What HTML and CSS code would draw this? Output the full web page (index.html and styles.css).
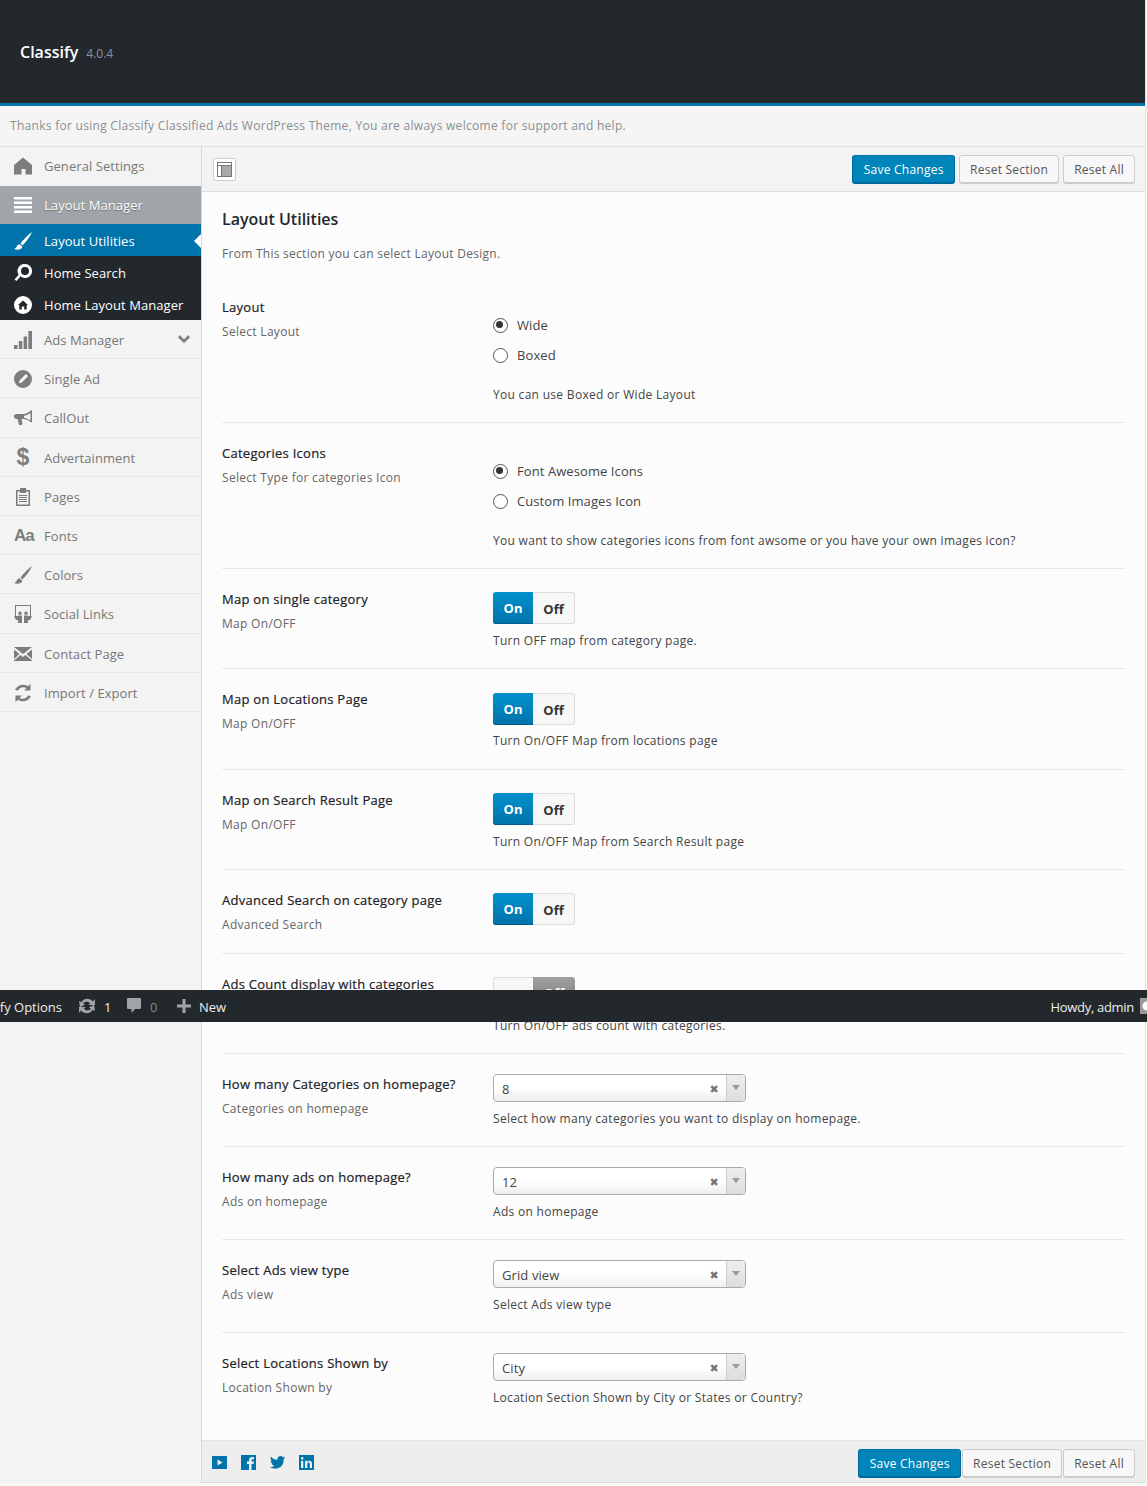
FILE: index.html
```html
<!DOCTYPE html>
<html lang="en">
<head>
<meta charset="utf-8">
<title>Classify Options</title>
<link rel="stylesheet" href="styles.css">
</head>
<body>
<div class="panel">
  <header class="head"><h1 class="brand">Classify</h1><span class="ver">4.0.4</span></header>
  <div class="intro">Thanks for using Classify Classified Ads WordPress Theme, You are always welcome for support and help.</div>
  <div class="main">
    <nav class="side">
      <a class="item first"><svg class="ico" viewBox="0 0 18 18"><path d="M9 .5 18 8v9.500h-6.500V12H7.500v5.500H0V8z"/></svg>General Settings</a>
      <a class="item parent"><svg class="ico" viewBox="0 0 18 18"><path d="M0 1h18v2.600H0zM0 5.500h18v2.600H0zM0 10h18v2.600H0zM0 14.500h18v2.600H0z"/></svg>Layout Manager</a>
      <a class="sub current"><svg class="ico" viewBox="0 0 18 18"><path d="M18 0C15 2 9.500 7.500 6.500 11.500l2 2C12 10 16.500 4 18 0zM5.500 12.300C2.500 12.500 3.500 16 0 17c3 1.200 8 1 8.300-2.500z"/></svg>Layout Utilities</a>
      <a class="sub"><svg class="ico" viewBox="0 0 18 18"><path fill-rule="evenodd" d="M11 0a7 7 0 1 1-4.500 12.300L2.500 17 .5 15.500l4.200-4.700A7 7 0 0 1 11 0zm0 3a4 4 0 1 0 0 8 4 4 0 0 0 0-8z"/></svg>Home Search</a>
      <a class="sub"><svg class="ico" viewBox="0 0 18 18"><path fill-rule="evenodd" d="M9 0a9 9 0 1 1 0 18A9 9 0 0 1 9 0zm0 4.500L4 9h1.300v4.500h2.500v-3h2.400v3h2.500V9H14z"/></svg>Home Layout Manager</a>
      <a class="item"><svg class="ico" viewBox="0 0 18 18"><path d="M0 14h3.500v4H0zM4.800 10h3.500v8H4.800zM9.600 5.500h3.500V18H9.600zM14.400 0H18v18h-3.600z"/></svg>Ads Manager<svg class="chev" viewBox="0 0 12 8"><path d="M1.500 0 6 4.300 10.500 0 12 2.500 6 8 0 2.500z"/></svg></a>
      <a class="item"><svg class="ico" viewBox="0 0 18 18"><path fill-rule="evenodd" d="M9 0a9 9 0 1 1 0 18A9 9 0 0 1 9 0zm2.700 4.300-6 6-.9 3 3-.8 6-6c.5-.6-1.500-2.700-2.100-2.200z"/></svg>Single Ad</a>
      <a class="item"><svg class="ico" viewBox="0 0 18 18"><path fill-rule="evenodd" d="M18 1v12l-1 .4C14.500 11 12 10 9 10H7.500l1 4.500-1 1.500H5L3.500 10H2.500C1 10 0 9 0 7.500S1 5 2.500 5H9c3 0 5.500-1.500 8-3.600zM16.500 4C14.500 5.500 12 6.500 10 6.700v2c2 .3 4.500 1.200 6.500 2.600z"/></svg>CallOut</a>
      <a class="item"><span class="glyph dollar">$</span>Advertainment</a>
      <a class="item"><svg class="ico" viewBox="0 0 18 18"><path fill-rule="evenodd" d="M2 2h4V0h6v2h4v16H2zM3.500 3.500v13h11v-13H12V5H6V3.500zM5 7h8v1H5zM5 9h8v1H5zM5 11h8v1H5zM5 13h8v1H5z"/></svg>Pages</a>
      <a class="item"><span class="glyph aa">Aa</span>Fonts</a>
      <a class="item"><svg class="ico" viewBox="0 0 18 18"><path d="M18 0C15 2 9.500 7.500 6.500 11.500l2 2C12 10 16.500 4 18 0zM5.500 12.300C2.500 12.500 3.500 16 0 17c3 1.200 8 1 8.300-2.500z"/></svg>Colors</a>
      <a class="item"><svg class="ico" viewBox="0 0 18 18"><path fill-rule="evenodd" d="M1 0h16v11h-1V1H2v10H1zM6 6.500a1.800 1.800 0 1 1 0 3.600 1.800 1.800 0 0 1 0-3.600zm6 0a1.800 1.800 0 1 1 0 3.600 1.800 1.800 0 0 1 0-3.600zM0 11h4v-.5h4V18H4v-3H2zM18 11h-4v-.5h-4V18h4v-3h2z"/></svg>Social Links</a>
      <a class="item"><svg class="ico" viewBox="0 0 18 18"><path d="M0 2h18l-9 7zM0 4.500 5.500 9 0 14zM18 4.500 12.500 9l5.500 5zM0 15.500l6.500-5.500L9 12l2.500-2 6.500 5.500V16H0z"/></svg>Contact Page</a>
      <a class="item"><svg class="ico" viewBox="0 0 18 18"><path d="M16.500 0v6.500H10l2.500-2.400C10 2.500 6 3 4 6.500L1 6C3.200 1 9-1 14 2.200zM1.500 18v-6.500H8l-2.500 2.400c2.500 1.600 6.500 1.100 8.500-2.400l3 .5C14.800 17 9 19 4 15.800z"/></svg>Import / Export</a>
    </nav>
    <section class="content">
      <div class="bar top">
        <span class="layout-ico"><svg viewBox="0 0 15 15"><path fill-rule="evenodd" d="M0 0h15v15H0zm1 1v2h13V1zm0 3v10h3V4zm4 0v10h9V4z"/><path class="shade" d="M5 4h9v10H5z"/></svg></span>
        <div class="actions"><button class="btn primary">Save Changes</button><button class="btn">Reset Section</button><button class="btn">Reset All</button></div>
      </div>
      <div class="body">
        <h2 class="sec-title">Layout Utilities</h2>
        <p class="sec-desc">From This section you can select Layout Design.</p>
        <div class="row radio-row">
          <div><div class="label">Layout</div><div class="hint">Select Layout</div></div>
          <div class="field">
            <div class="radio on">Wide</div>
            <div class="radio">Boxed</div>
            <div class="note radio-note">You can use Boxed or Wide Layout</div>
          </div>
        </div>
        <div class="row radio-row">
          <div><div class="label">Categories Icons</div><div class="hint">Select Type for categories Icon</div></div>
          <div class="field">
            <div class="radio on">Font Awesome Icons</div>
            <div class="radio">Custom Images Icon</div>
            <div class="note radio-note">You want to show categories icons from font awsome or you have your own images icon?</div>
          </div>
        </div>
        <div class="row switch-row">
          <div><div class="label">Map on single category</div><div class="hint">Map On/OFF</div></div>
          <div class="field"><div class="switch"><span class="sw-on active">On</span><span class="sw-off">Off</span></div><div class="note">Turn OFF map from category page.</div></div>
        </div>
        <div class="row switch-row">
          <div><div class="label">Map on Locations Page</div><div class="hint">Map On/OFF</div></div>
          <div class="field"><div class="switch"><span class="sw-on active">On</span><span class="sw-off">Off</span></div><div class="note">Turn On/OFF Map from locations page</div></div>
        </div>
        <div class="row switch-row">
          <div><div class="label">Map on Search Result Page</div><div class="hint">Map On/OFF</div></div>
          <div class="field"><div class="switch"><span class="sw-on active">On</span><span class="sw-off">Off</span></div><div class="note">Turn On/OFF Map from Search Result page</div></div>
        </div>
        <div class="row switch-row short">
          <div><div class="label">Advanced Search on category page</div><div class="hint">Advanced Search</div></div>
          <div class="field"><div class="switch"><span class="sw-on active">On</span><span class="sw-off">Off</span></div></div>
        </div>
        <div class="row switch-row">
          <div><div class="label">Ads Count display with categories</div><div class="hint">Ads Count</div></div>
          <div class="field"><div class="switch"><span class="sw-on">On</span><span class="sw-off dark">Off</span></div><div class="note">Turn On/OFF ads count with categories.</div></div>
        </div>
        <div class="row select-row">
          <div><div class="label">How many Categories on homepage?</div><div class="hint">Categories on homepage</div></div>
          <div class="field"><div class="select"><span class="sel-val">8</span><span class="sel-x">✖</span><span class="sel-arrow"></span></div><div class="note">Select how many categories you want to display on homepage.</div></div>
        </div>
        <div class="row select-row">
          <div><div class="label">How many ads on homepage?</div><div class="hint">Ads on homepage</div></div>
          <div class="field"><div class="select"><span class="sel-val">12</span><span class="sel-x">✖</span><span class="sel-arrow"></span></div><div class="note">Ads on homepage</div></div>
        </div>
        <div class="row select-row">
          <div><div class="label">Select Ads view type</div><div class="hint">Ads view</div></div>
          <div class="field"><div class="select"><span class="sel-val">Grid view</span><span class="sel-x">✖</span><span class="sel-arrow"></span></div><div class="note">Select Ads view type</div></div>
        </div>
        <div class="row select-row last">
          <div><div class="label">Select Locations Shown by</div><div class="hint">Location Shown by</div></div>
          <div class="field"><div class="select"><span class="sel-val">City</span><span class="sel-x">✖</span><span class="sel-arrow"></span></div><div class="note">Location Section Shown by City or States or Country?</div></div>
        </div>
      </div>
      <div class="bar bottom">
        <div class="socials">
          <svg class="soc" viewBox="0 0 15 15"><path fill-rule="evenodd" d="M0 1h15v13H0zm5.500 3.500v6l5-3z"/></svg>
          <svg class="soc fb" viewBox="0 0 15 15"><path fill-rule="evenodd" d="M0 0h15v15h-4.500V9h2l.4-2.400h-2.400V5.300c0-.7.300-1.100 1.100-1.100H13V2c-2.900-.4-5 .3-5 3v1.600H6V9h2v6H0z"/></svg>
          <svg class="soc" viewBox="0 0 16 14"><path d="M16 1.700c-.6.3-1.200.4-1.900.5.700-.4 1.200-1 1.400-1.800-.6.4-1.300.6-2 .8A3.300 3.300 0 0 0 7.900 4.200C5.200 4 2.800 2.800 1.100.8c-.9 1.500-.4 3.400 1 4.400-.5 0-1-.2-1.500-.4 0 1.600 1.100 3 2.600 3.300-.5.100-1 .1-1.500 0 .4 1.300 1.600 2.200 3.100 2.300A6.600 6.600 0 0 1 0 11.800C6.300 15.800 15 12.200 14.400 4c.6-.6 1.200-1.400 1.600-2.300z"/></svg>
          <svg class="soc" viewBox="0 0 15 15"><path fill-rule="evenodd" d="M0 0h15v15H0zm2 5.700V13h2.300V5.700zM3.200 2a1.300 1.300 0 1 0 0 2.700 1.300 1.300 0 0 0 0-2.700zM6 5.700V13h2.300V9c0-2 2.500-2.200 2.500 0v4H13V8.600c0-3.500-3.500-3.400-4.700-1.700v-1.200z"/></svg>
        </div>
        <div class="actions tight"><button class="btn primary">Save Changes</button><button class="btn">Reset Section</button><button class="btn">Reset All</button></div>
      </div>
    </section>
  </div>
</div>
<div class="adminbar">
  <span class="ab-clip"><span class="ab-name">Classify Options</span></span>
  <svg class="ab-ico refresh" viewBox="0 0 18 18"><path d="M15 4.500C11.500.5 6 1 3.500 5L1 4.200l1 6 5.200-2.700L5 6.500c2-2.500 5-2.500 7.200 0L10 8h7V2zM3 13.500c3.500 4 9 3.500 11.500-.5l2.500.8-1-6-5.200 2.700 2.200 1c-2 2.500-5 2.500-7.200 0L8 10H1v6z"/></svg>
  <span class="ab-count">1</span>
  <svg class="ab-ico bubble" viewBox="0 0 14 16"><path d="M1 0h12a1 1 0 0 1 1 1v9a1 1 0 0 1-1 1H8l-3.500 4v-4H1a1 1 0 0 1-1-1V1a1 1 0 0 1 1-1z"/></svg>
  <span class="ab-count muted">0</span>
  <svg class="ab-ico plus" viewBox="0 0 14 14"><path d="M5.500 0h3v5.500H14v3H8.500V14h-3V8.500H0v-3h5.500z"/></svg>
  <span class="ab-new">New</span>
  <span class="ab-howdy">Howdy, admin</span>
  <span class="avatar"></span>
</div>
</body>
</html>
```
FILE: styles.css
```css
* { box-sizing: border-box; }
html, body { margin: 0; padding: 0; }
body {
  position: relative;
  height: 1486px;
  overflow: hidden;
  background: #f9f9f9;
  font-family: "Open Sans", "Noto Sans", sans-serif;
  font-size: 13px;
  color: #444;
}
.panel { width: 1146px; border-right: 1px solid #e5e5e5; }
.head {
  height: 106px;
  background: #23282d;
  border-bottom: 3px solid #0073aa;
  padding: 40px 20px 0;
  display: flex;
  align-items: baseline;
  gap: 8px;
}
.brand { margin: 0; font-size: 16px; line-height: 24px; font-weight: 600; color: #fff; }
.ver { font-size: 12px; color: #8b929b; }
.intro {
  height: 41px;
  padding: 0 10px;
  line-height: 39px;
  font-size: 12px;
  letter-spacing: .285px;
  color: #8a8f94;
  background: #f5f5f5;
  border-bottom: 1px solid #dfdfdf;
}
.main { display: flex; height: 1336px; }
.side {
  width: 202px;
  flex: none;
  background: #f3f3f3;
  border-right: 1px solid #d8d8d8;
}
.item, .sub {
  display: flex;
  align-items: center;
  gap: 12px;
  padding-left: 14px;
  position: relative;
  white-space: nowrap;
  letter-spacing: .06px;
}
.item { height: 39.2px; padding-top: 2px; color: #777; border-bottom: 1px solid #e8e8e8; }
.item .ico { fill: #7d7d7d; }
.item.first { height: 39px; padding-top: 0; padding-bottom: 2px; border-bottom: 0; }
.item.parent {
  height: 38px;
  padding-top: 0;
  background: #a0a5aa;
  color: #fff;
  border-bottom: 0;
  text-shadow: 0 1px 1px rgba(0, 0, 0, .35);
}
.item.parent .ico { fill: #fff; }
.sub { height: 32px; padding-top: 2px; background: #23282d; color: #fff; }
.sub .ico { fill: #fff; }
.sub:last-of-type { height: 33px; }
.sub.current { background: #0073aa; }
.sub.current::after {
  content: "";
  position: absolute;
  right: 0;
  top: 10px;
  border: 7px solid transparent;
  border-right-color: #fff;
  border-left-width: 0;
}
.ico { width: 18px; height: 18px; flex: none; }
.glyph { width: 18px; flex: none; text-align: center; font-weight: 700; color: #7d7d7d; font-family: "Liberation Sans", sans-serif; }
.dollar { font-size: 23px; }
.aa { font-size: 17px; letter-spacing: -1px; }
.chev { width: 12px; height: 8px; fill: #7d7d7d; position: absolute; right: 11px; top: 15px; }
.content { flex: 1; display: flex; flex-direction: column; min-width: 0; background: #fcfcfc; }
.bar { display: flex; align-items: center; justify-content: space-between; background: #f3f3f3; }
.bar.top { height: 45px; padding: 0 10px 0 11px; border-bottom: 1px solid #dfdfdf; flex: none; }
.bar.bottom {
  height: 43px;
  padding: 2px 10px 0 10px;
  background: #eee;
  border-top: 1px solid #e4e4e4;
  border-bottom: 1px solid #dcdcdc;
  flex: none;
}
.layout-ico {
  width: 23px;
  height: 23px;
  padding: 3px;
  border: 1px solid #ccc;
  border-radius: 2px;
  background: #fff;
  display: block;
}
.layout-ico svg { display: block; width: 15px; height: 15px; fill: #777; }
.layout-ico .shade { fill: #aaa; }
.actions { display: flex; gap: 4px; }
.actions.tight { gap: 1px; }
.btn {
  height: 28px;
  padding: 1px 10px 0;
  border: 1px solid #ccc;
  border-radius: 3px;
  background: #f7f7f7;
  box-shadow: 0 1px 0 #ccc;
  color: #555;
  font: 12px/26px "Open Sans", "Noto Sans", sans-serif;
  letter-spacing: .24px;
  white-space: nowrap;
}
.btn.primary { padding: 1px 10.5px 0; background: #0085ba; border-color: #0073aa #006799 #006799; color: #fff; box-shadow: 0 1px 0 #006799; }
.body { flex: 1; padding: 0 20px; min-height: 0; overflow: hidden; }
.sec-title { margin: 15px 0 0; font-size: 16px; line-height: 24px; font-weight: 600; color: #23282d; }
.sec-desc { margin: 13px 0 0; line-height: 20px; font-size: 12px; letter-spacing: .27px; color: #666; }
.row {
  display: grid;
  grid-template-columns: 271px 1fr;
  border-bottom: 1px solid #e8e8e8;
  padding-top: 20px;
}
.row.last { border-bottom: 0; }
.radio-row { height: 146px; }
.sec-desc + .row { margin-top: 13px; }
.switch-row { height: 100.4px; }
.switch-row.short { height: 83.8px; }
.select-row { height: 93px; }
.label { line-height: 20px; font-size: 13px; font-weight: 500; letter-spacing: .27px; color: #1d2126; -webkit-text-stroke: .2px #1d2126; }
.hint { margin-top: 5px; line-height: 20px; font-size: 12px; letter-spacing: .3px; color: #666; }
.field { min-width: 0; }
.note { line-height: 20px; font-size: 12px; letter-spacing: .3px; color: #444; }
.radio-note { margin-top: 15px; }
.radio {
  height: 30px;
  line-height: 30px;
  padding-left: 24px;
  position: relative;
  color: #444;
  font-size: 13px;
  letter-spacing: .08px;
}
.radio:first-child { margin-top: 13px; }
.radio::before {
  content: "";
  position: absolute;
  left: 0;
  top: 8px;
  width: 13px;
  height: 13px;
  border: 1px solid #555;
  border-radius: 50%;
  background: #fff;
}
.radio.on::after {
  content: "";
  position: absolute;
  left: 3px;
  top: 11px;
  width: 7px;
  height: 7px;
  border-radius: 50%;
  background: #333;
}
.switch {
  display: flex;
  width: 82px;
  height: 32px;
  margin-top: 3.3px;
  margin-bottom: 6.7px;
  border-radius: 3px;
  font-weight: 700;
  font-size: 13px;
  line-height: 32px;
  text-align: center;
}
.sw-on, .sw-off { display: block; }
.sw-on { width: 40px; background: #f7f7f7; border: 1px solid #ddd; border-right: 0; border-radius: 3px 0 0 3px; color: #333; }
.sw-off { width: 42px; background: #f7f7f7; border: 1px solid #ddd; border-left: 0; border-radius: 0 3px 3px 0; color: #333; }
.sw-on.active { background: linear-gradient(#0091cd, #0073aa); border: 0; color: #fff; box-shadow: inset 0 -1px 0 #005e8c; }
.sw-off.dark { background: linear-gradient(#a0a0a0, #777); color: #fff; border: 0; }
.select {
  display: flex;
  align-items: center;
  width: 253px;
  height: 28px;
  border: 1px solid #aaa;
  border-radius: 4px;
  background: linear-gradient(#fff 50%, #eee);
  margin-bottom: 7px;
  overflow: hidden;
}
.sel-val { flex: 1; padding: 1px 0 0 8px; font-size: 13px; letter-spacing: .1px; color: #444; }
.sel-x { width: 14px; padding-top: 2px; font-size: 11px; color: #777; font-family: "DejaVu Sans", sans-serif; margin-right: 5px; text-align: center; }
.sel-arrow {
  width: 19px;
  height: 100%;
  flex: none;
  border-left: 1px solid #ccc;
  background: linear-gradient(#eee, #ddd);
  position: relative;
}
.sel-arrow::after {
  content: "";
  position: absolute;
  left: 5px;
  top: 10px;
  border: 4px solid transparent;
  border-top: 5px solid #999;
  border-bottom: 0;
}
.socials { display: flex; align-items: center; gap: 14px; }
.soc { width: 15px; height: 15px; fill: #0073aa; display: block; }
.adminbar {
  position: absolute;
  left: 0;
  top: 990px;
  width: 1147px;
  height: 32px;
  padding-top: 2px;
  background: #23282d;
  color: #eee;
  display: flex;
  align-items: center;
  font-size: 13px;
  white-space: nowrap;
  overflow: hidden;
}
.ab-clip { width: 62px; overflow: hidden; display: flex; justify-content: flex-end; flex: none; }
.ab-name { flex: none; }
.ab-ico { flex: none; fill: #a0a5aa; margin-top: -3px; }
.ab-ico.refresh { width: 18px; height: 18px; margin-left: 16px; }
.ab-count { margin-left: 8px; width: 7px; }
.ab-count.muted { margin-left: 9px; color: #82878c; }
.ab-ico.bubble { width: 14px; height: 16px; margin-left: 16px; }
.ab-ico.plus { width: 14px; height: 14px; margin-left: 20px; }
.ab-new { margin-left: 8px; }
.ab-howdy { margin-left: auto; margin-right: 6px; letter-spacing: -.3px; }
.avatar { width: 7px; height: 16px; margin-top: -2px; background: radial-gradient(circle at 7px 8px, #fff 4px, #9a9a9a 5px); flex: none; }
```
